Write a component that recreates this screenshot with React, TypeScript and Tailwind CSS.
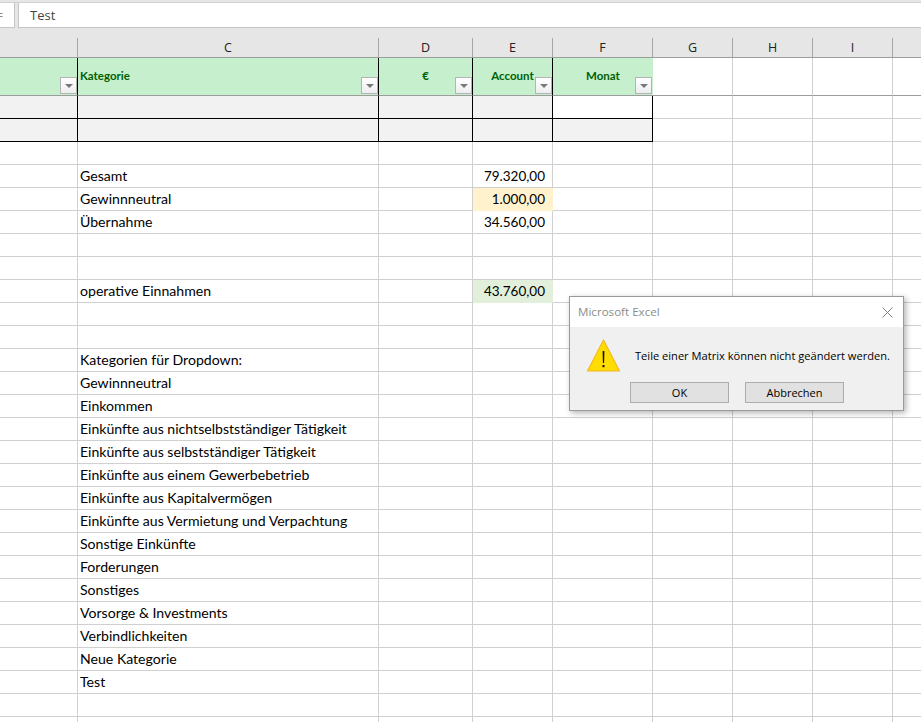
const cols = [
  { k: "", w: "w-[78px]" },
  { k: "C", w: "w-[301px]" },
  { k: "D", w: "w-[94px]" },
  { k: "E", w: "w-[80px]" },
  { k: "F", w: "w-[100px]" },
  { k: "G", w: "w-[80px]" },
  { k: "H", w: "w-[80px]" },
  { k: "I", w: "w-[80px]" },
  { k: "", w: "flex-1" },
];

const labels: Record<number, string> = {
  4: "Gesamt",
  5: "Gewinnneutral",
  6: "Übernahme",
  9: "operative Einnahmen",
  12: "Kategorien für Dropdown:",
  13: "Gewinnneutral",
  14: "Einkommen",
  15: "Einkünfte aus nichtselbstständiger Tätigkeit",
  16: "Einkünfte aus selbstständiger Tätigkeit",
  17: "Einkünfte aus einem Gewerbebetrieb",
  18: "Einkünfte aus Kapitalvermögen",
  19: "Einkünfte aus Vermietung und Verpachtung",
  20: "Sonstige Einkünfte",
  21: "Forderungen",
  22: "Sonstiges",
  23: "Vorsorge & Investments",
  24: "Verbindlichkeiten",
  25: "Neue Kategorie",
  26: "Test",
};

const values: Record<number, { t: string; bg: string }> = {
  4: { t: "79.320,00", bg: "bg-white" },
  5: { t: "1.000,00", bg: "bg-[#fff2cc]" },
  6: { t: "34.560,00", bg: "bg-white" },
  9: { t: "43.760,00", bg: "bg-[#e2efda]" },
};

const gill = "font-['Lato','Liberation_Sans',sans-serif]";

function FilterButton({ className }: { className: string }) {
  return (
    <span
      className={`absolute bottom-[1px] flex h-[17px] w-[17px] items-center justify-center border border-[#b4b4b4] bg-gradient-to-b from-white to-[#eeeef2] ${className}`}
    >
      <svg width="8" height="4" viewBox="0 0 8 4">
        <path d="M0 0h8L4 4z" fill="#77777c" />
      </svg>
    </span>
  );
}

function HeaderRow() {
  const cell = "relative flex h-[38px] items-center border-b border-b-[#9c9c9c] bg-[#c6efce] pb-[2px] text-[11.5px] font-bold text-[#006100]";
  return (
    <div className={`flex ${gill}`}>
      <div className={`${cell} w-[78px] border-r border-r-black`}>
        <FilterButton className="right-0" />
      </div>
      <div className={`${cell} w-[301px] border-r border-r-black pl-[2px]`}>
        Kategorie
        <FilterButton className="right-0" />
      </div>
      <div className={`${cell} w-[94px] justify-center border-r border-r-black`}>
        €
        <FilterButton className="right-0" />
      </div>
      <div className={`${cell} w-[80px] justify-center border-r border-r-black`}>
        Account
        <FilterButton className="right-0" />
      </div>
      <div className={`${cell} w-[100px] justify-center`}>
        Monat
        <FilterButton className="right-[1px]" />
      </div>
      {[0, 1, 2].map((i) => (
        <div key={i} className="h-[38px] w-[80px] border-r border-b border-r-[#d0d0d0] border-b-[#9c9c9c] bg-white" />
      ))}
      <div className="h-[38px] flex-1 border-b border-b-[#9c9c9c] bg-white" />
    </div>
  );
}

function TableRow({ whiteF }: { whiteF: boolean }) {
  const c = "h-[23px] border-r border-b border-black bg-[#f2f2f2]";
  return (
    <div className="flex">
      <div className={`${c} w-[78px]`} />
      <div className={`${c} w-[301px]`} />
      <div className={`${c} w-[94px]`} />
      <div className={`${c} w-[80px]`} />
      <div className={`h-[23px] w-[100px] border-r border-b border-black ${whiteF ? "bg-white" : "bg-[#f2f2f2]"}`} />
      {[0, 1, 2].map((i) => (
        <div key={i} className="h-[23px] w-[80px] border-r border-b border-[#d0d0d0] bg-white" />
      ))}
      <div className="h-[23px] flex-1 border-b border-[#d0d0d0] bg-white" />
    </div>
  );
}

function DataRow({ n }: { n: number }) {
  const c = "h-[23px] border-r border-b border-[#d0d0d0]";
  const v = values[n];
  return (
    <div className={`flex leading-[22px] text-black ${gill}`}>
      <div className={`${c} w-[78px]`} />
      <div className={`${c} w-[301px] pl-[2px] text-[14.1px]`}>{labels[n] ?? ""}</div>
      <div className={`${c} w-[94px]`} />
      <div className={`${c} w-[80px] pr-[7px] text-right text-[13.5px] ${v ? v.bg : ""} ${v && v.bg !== "bg-white" ? "border-transparent" : ""}`}>
        {v ? v.t : ""}
      </div>
      <div className={`${c} w-[100px]`} />
      <div className={`${c} w-[80px]`} />
      <div className={`${c} w-[80px]`} />
      <div className={`${c} w-[80px]`} />
      <div className="h-[23px] flex-1 border-b border-[#d0d0d0]" />
    </div>
  );
}

function WarningIcon() {
  return (
    <svg width="33" height="33" viewBox="0 0 33 33" className="shrink-0">
      <path d="M16.5 1 L32.5 32 H.5 Z" fill="#ffdd00" stroke="#f5b81f" strokeWidth="1.2" strokeLinejoin="round" />
      <path d="M15.6 12h1.8l-.3 12h-1.2z" fill="#111" />
      <rect x="15.5" y="26" width="2" height="2.2" fill="#111" />
    </svg>
  );
}

export default function App() {
  const rows = Array.from({ length: 25 }, (_, i) => i + 4);
  return (
    <div className="relative h-[722px] w-[921px] overflow-hidden bg-white">
      {/* formula bar */}
      <div className="h-[38px] bg-[#e6e6e6] pt-[2px]">
        <div className="flex h-[26px] gap-[3px] border-t border-[#d0d0d0]">
          <div className="flex h-[25px] w-[15px] items-center border-r border-b border-[#c6c6c6] bg-white">
            <svg width="3" height="5" viewBox="0 0 3 5">
              <path d="M0 .5h2.5M0 3.5h2.5" stroke="#888" strokeWidth="1" fill="none" />
            </svg>
          </div>
          <div className="h-[25px] flex-1 border-b border-l border-[#c6c6c6] bg-white pl-[11px] font-['Open_Sans',sans-serif] text-[13px] leading-[24px] text-[#444]">
            Test
          </div>
        </div>
      </div>

      {/* column letters */}
      <div className="flex h-[20px] border-b border-[#9c9c9c] bg-[#e6e6e6]">
        {cols.map((c, i) => (
          <div
            key={i}
            className={`h-[19px] text-center font-['Open_Sans',sans-serif] text-[12.5px] leading-[20px] text-[#222] ${c.w} ${
              i < cols.length - 1 ? "border-r border-[#a6a6a6]" : ""
            }`}
          >
            {c.k}
          </div>
        ))}
      </div>

      <HeaderRow />
      <TableRow whiteF />
      <TableRow whiteF={false} />
      <div className="flex">
        {cols.map((c, i) => (
          <div key={i} className={`h-[23px] border-b border-[#d0d0d0] ${c.w} ${i < cols.length - 1 ? "border-r" : ""}`} />
        ))}
      </div>
      {rows.map((n) => (
        <DataRow key={n} n={n} />
      ))}

      {/* dialog */}
      <div className="absolute left-[569px] top-[296px] flex h-[115px] w-[335px] flex-col border border-[#9a9a9a] bg-[#f0f0f0] font-['Open_Sans',sans-serif] shadow-[2px_2px_6px_rgba(0,0,0,0.3)]">
        <div className="flex h-[30px] items-center justify-between bg-white pl-[8px] pr-[10px]">
          <span className="text-[11.6px] text-[#8c8c8c]">Microsoft Excel</span>
          <svg width="11" height="11" viewBox="0 0 11 11">
            <path d="M.5.5l10 10M10.5.5l-10 10" stroke="#808080" strokeWidth="1" fill="none" />
          </svg>
        </div>
        <div className="flex items-center gap-[15px] pl-[17px] pt-[12px]">
          <WarningIcon />
          <span className="pt-[1px] text-[11.1px] text-black">Teile einer Matrix können nicht geändert werden.</span>
        </div>
        <div className="flex gap-[16px] pl-[60px] pt-[10px]">
          <button className="h-[21px] w-[99px] border border-[#adadad] bg-[#e1e1e1] text-[11px] leading-[18px] text-black">OK</button>
          <button className="h-[21px] w-[99px] border border-[#adadad] bg-[#e1e1e1] text-[11px] leading-[18px] text-black">Abbrechen</button>
        </div>
      </div>
    </div>
  );
}
